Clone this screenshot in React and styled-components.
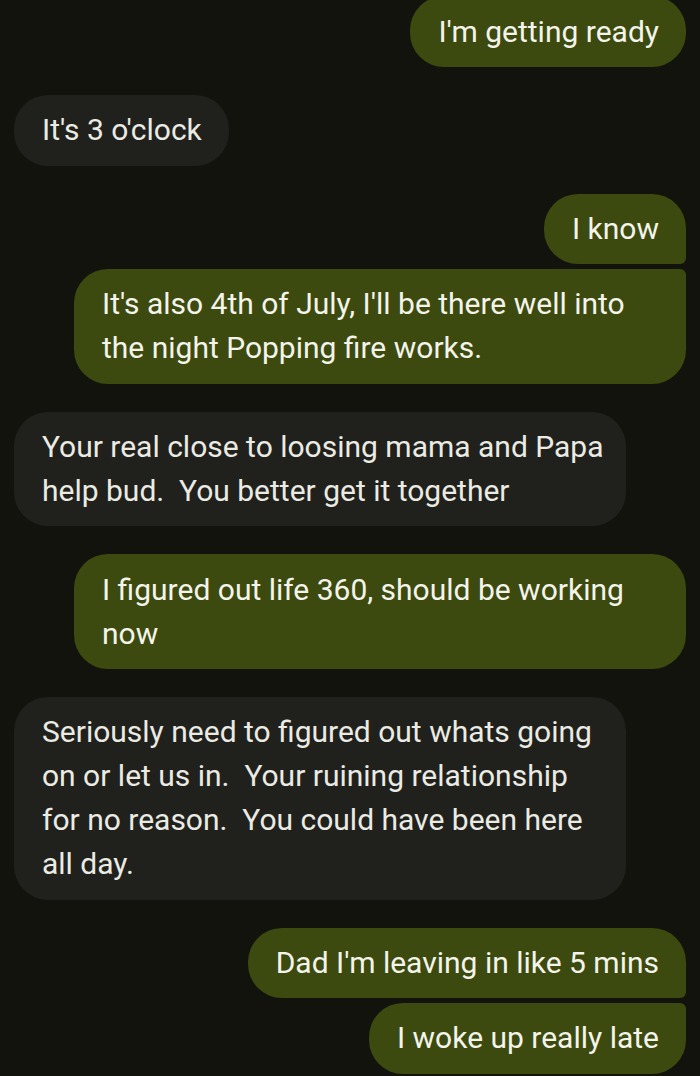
import React from "react";
import styled, { createGlobalStyle, css } from "styled-components";

const Global = createGlobalStyle`
  html, body {
    margin: 0;
    padding: 0;
    background: #12130c;
  }
  body {
    font-family: Roboto, "Noto Sans", "Liberation Sans", sans-serif;
    -webkit-font-smoothing: antialiased;
  }
`;

const Thread = styled.div`
  display: flex;
  flex-direction: column;
  padding: 0 14px;
  margin-top: -3.6px;
  height: 1080px;
  overflow: hidden;
  background: #12130c;
`;

const Group = styled.div`
  display: flex;
  flex-direction: column;
  align-items: ${(p) => (p.$out ? "flex-end" : "flex-start")};
  gap: 5px;
  margin-bottom: 28px;
`;

const Bubble = styled.div`
  box-sizing: border-box;
  max-width: 612px;
  padding: 13.3px 27px 13.3px 28px;
  font-size: 30px;
  line-height: 44px;
  border-radius: 34px;
  white-space: pre;
  ${(p) =>
    p.$out
      ? css`
          background: #3c4a10;
          color: #f4f4ea;
        `
      : css`
          background: #20211d;
          color: #ebebe3;
        `}
  ${(p) =>
    p.$full &&
    css`
      width: 612px;
    `}
  ${(p) =>
    p.$out &&
    p.$pos === "first" &&
    css`
      border-bottom-right-radius: 6px;
    `}
  ${(p) =>
    p.$out &&
    p.$pos === "last" &&
    css`
      border-top-right-radius: 6px;
    `}
`;

const groups = [
  { out: true, msgs: [["I'm getting ready"]] },
  { out: false, msgs: [["It's 3 o'clock"]] },
  {
    out: true,
    msgs: [
      ["I know"],
      ["It's also 4th of July, I'll be there well into", "the night Popping fire works."],
    ],
  },
  {
    out: false,
    msgs: [["Your real close to loosing mama and Papa", "help bud.  You better get it together"]],
  },
  { out: true, msgs: [["I figured out life 360, should be working", "now"]] },
  {
    out: false,
    msgs: [
      [
        "Seriously need to figured out whats going",
        "on or let us in.  Your ruining relationship",
        "for no reason.  You could have been here",
        "all day.",
      ],
    ],
  },
  { out: true, msgs: [["Dad I'm leaving in like 5 mins"], ["I woke up really late"]] },
];

export default function App() {
  return (
    <>
      <Global />
      <Thread>
        {groups.map((g, gi) => (
          <Group key={gi} $out={g.out}>
            {g.msgs.map((lines, mi) => {
              const pos =
                g.msgs.length === 1 ? "single" : mi === 0 ? "first" : mi === g.msgs.length - 1 ? "last" : "mid";
              return (
                <Bubble key={mi} $out={g.out} $pos={pos} $full={lines.length > 1}>
                  {lines.join("\n")}
                </Bubble>
              );
            })}
          </Group>
        ))}
      </Thread>
    </>
  );
}
